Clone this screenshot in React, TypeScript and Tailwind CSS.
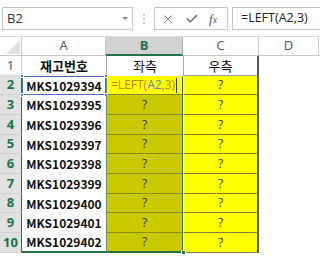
import { X, Check } from 'lucide-react'

const heights = [20, 19, 20, 20, 19, 20, 20, 19, 20, 20]
const codes = [
  'MKS1029394',
  'MKS1029395',
  'MKS1029396',
  'MKS1029397',
  'MKS1029398',
  'MKS1029399',
  'MKS1029400',
  'MKS1029401',
  'MKS1029402',
]

function FormulaBar() {
  return (
    <div className="flex items-start h-[36px] pt-[7px]">
      <div className="ml-[2px] w-[131px] h-[23px] border border-[#c6c6c6] flex items-center pl-[4px] pr-[4px]">
        <span className="text-[13px] text-[#333] font-['Open_Sans',sans-serif] leading-none">B2</span>
        <span className="ml-auto w-0 h-0 border-l-[3px] border-r-[3px] border-t-[3px] border-l-transparent border-r-transparent border-t-[#8a8a8a]" />
      </div>
      <div className="ml-[10px] mt-[7px] flex flex-col gap-[2px]">
        <span className="w-[2px] h-[2px] bg-[#cfcfcf]" />
        <span className="w-[2px] h-[2px] bg-[#cfcfcf]" />
        <span className="w-[2px] h-[2px] bg-[#cfcfcf]" />
      </div>
      <div className="ml-[9px] w-[74px] h-[23px] border border-[#c6c6c6] flex items-center text-[#555]">
        <X className="ml-[6px] w-[14px] h-[14px]" strokeWidth={1.3} />
        <Check className="ml-[10px] w-[14px] h-[14px]" strokeWidth={2.2} />
        <span className="ml-[10px] text-[13px] italic font-['Liberation_Serif',serif] text-[#555]">
          f<span className="text-[10px]">x</span>
        </span>
      </div>
      <div className="ml-[4px] flex-1 h-[23px] border border-r-0 border-[#c6c6c6] flex items-center pl-[8px]">
        <span className="text-[12.5px] text-[#222] font-['Open_Sans',sans-serif] leading-none">=LEFT(A2,3)</span>
      </div>
    </div>
  )
}

function HeaderRow() {
  return (
    <div className="flex h-[20px] border-t border-[#dcdcdc] font-['Open_Sans',sans-serif] text-[13px] text-[#555]">
      <div className="w-[22px] h-full border-r border-b border-[#c8c8c8] relative">
        <svg className="absolute left-0 top-0" width="22" height="19" viewBox="0 0 22 19">
          <polygon points="20,3 20,17 6,17" fill="#dfdfdf" />
        </svg>
      </div>
      <div className="w-[84px] h-full border-r border-b border-[#c8c8c8] flex items-center justify-center">A</div>
      <div className="w-[77px] h-full border-r border-[#b0b0b0] border-b-2 border-b-[#217346] bg-[#d2d2d2] flex items-center justify-center text-[#217346] font-bold">
        B
      </div>
      <div className="w-[76px] h-full border-r border-b border-[#c8c8c8] flex items-center justify-center">C</div>
      <div className="w-[60px] h-full border-r border-b border-[#c8c8c8] flex items-center justify-center">D</div>
      <div className="flex-1 h-full border-b border-[#c8c8c8]" />
    </div>
  )
}

function Corner({ className }: { className: string }) {
  return <span className={`absolute w-[4px] h-[4px] bg-[#4472c4] border border-white ${className}`} />
}

export default function App() {
  return (
    <div className="w-[320px] h-[257px] bg-white overflow-hidden font-['Noto_Sans_CJK_KR',sans-serif]">
      <FormulaBar />
      <HeaderRow />

      {/* row 1 */}
      <div className="flex" style={{ height: heights[0] }}>
        <div className="w-[22px] border-r border-b border-[#d4d4d4] flex items-center justify-center text-[13px] text-[#444] font-['Open_Sans',sans-serif]">
          1
        </div>
        <div className="w-[84px] flex items-center justify-center text-[13px] font-bold text-[#111]">재고번호</div>
        <div className="w-[77px] border-l border-[#a8a8a8] flex items-center justify-center text-[13px] text-[#111]">좌측</div>
        <div className="w-[76px] border-l border-[#a8a8a8] border-b border-b-[#9a9a9a] border-r-2 border-r-[#555] flex items-center justify-center text-[13px] text-[#111]">
          우측
        </div>
        <div className="flex-1" />
      </div>

      {codes.map((code, i) => {
        const r = i + 2
        const last = r === 10
        return (
          <div key={code} className="flex" style={{ height: heights[i + 1] }}>
            <div className="w-[22px] bg-[#e1e1e1] border-r border-r-[#217346] border-b border-b-[#cfcfcf] flex items-center justify-center text-[13px] font-bold text-[#217346] font-['Open_Sans',sans-serif]">
              {r}
            </div>
            <div
              className={`w-[84px] relative flex items-center justify-center text-[12px] font-bold text-[#111] ${
                last ? 'border-b-2 border-[#217346]' : ''
              }`}
            >
              {code}
              {r === 2 && (
                <div className="absolute inset-0 border border-[#4472c4]">
                  <Corner className="-left-[3px] -top-[3px]" />
                  <Corner className="-right-[3px] -top-[3px]" />
                  <Corner className="-left-[3px] -bottom-[3px]" />
                  <Corner className="-right-[3px] -bottom-[3px]" />
                </div>
              )}
            </div>
            {r === 2 ? (
              <div className="w-[77px] bg-[#ffff00] border-l border-[#6f8f6f] border-r border-r-[#3b6e4a] border-b border-b-[#8c8c1e] flex items-center pl-[4px] text-[12px] font-['Open_Sans',sans-serif] leading-none">
                <span className="text-[#c87f00]">=LEFT(</span>
                <span className="text-[#5b84c8]">A2</span>
                <span className="text-[#c87f00]">,3)</span>
                <span className="ml-[1px] w-[1px] h-[15px] bg-[#333]" />
              </div>
            ) : (
              <div
                className={`w-[77px] relative bg-[#c9c900] border-l border-[#6f8f6f] border-r border-r-[#3b6e4a] flex items-center justify-center text-[12px] text-[#333] font-['Open_Sans',sans-serif] ${
                  last ? 'border-b-2 border-b-[#217346]' : 'border-b border-b-[#8c8c1e]'
                }`}
              >
                ?
                {last && <span className="absolute -right-[4px] -bottom-[4px] w-[5px] h-[5px] bg-[#217346] border border-white" />}
              </div>
            )}
            <div className="w-[76px] bg-[#ffff00] border-l border-white border-r-2 border-r-[#555] border-b border-b-[#7f7f3a] flex items-center justify-center text-[12px] text-[#333] font-['Open_Sans',sans-serif]">
              ?
            </div>
            <div className="flex-1" />
          </div>
        )
      })}
    </div>
  )
}
